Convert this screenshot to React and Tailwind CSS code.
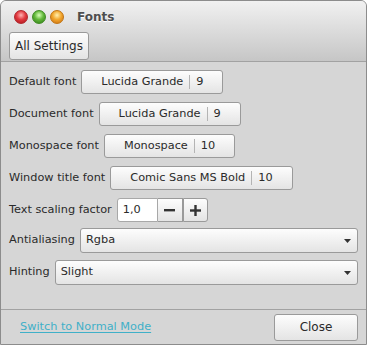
import React from "react";

const font = { fontFamily: '"DejaVu Sans", "Liberation Sans", sans-serif' };

const btn =
  "border border-[#9a9a9a] rounded-[3px] bg-gradient-to-b from-[#fdfdfd] to-[#e4e4e4] text-[#2a2a2a]";

// FONT PICKER BUTTON
const FontButton = ({ name, size }) => (
  <button className={`${btn} h-[24px] flex items-center pl-[19px] pr-[19px]`}>
    <span>{name}</span>
    <span className="mx-[6px] w-px h-[14px] bg-[#b4b4b4]" />
    <span>{size}</span>
  </button>
);

const Row = ({ label, children, className = "" }) => (
  <div className={`flex items-center gap-[5px] ${className}`}>
    <span className="whitespace-nowrap">{label}</span>
    {children}
  </div>
);

// DROPDOWN
const Select = ({ value }) => (
  <div className={`${btn} flex-1 h-[25px] flex items-center pl-[5px] pr-[6px]`}>
    <span className="flex-1">{value}</span>
    <svg width="7" height="4" viewBox="0 0 7 4">
      <path d="M0 0H7L3.5 4Z" fill="#333" />
    </svg>
  </div>
);

const Light = ({ c }) => (
  <span className={`w-[14px] h-[14px] rounded-full border ${c}`} />
);

const App = () => {
  return (
    <div
      style={font}
      className="w-[367px] h-[345px] border border-[#8c8c8c] rounded-t-[6px] overflow-hidden bg-[#d6d6d6] flex flex-col text-[11.3px] text-[#2a2a2a]"
    >
      {/* HEADER */}
      <div className="h-[61px] bg-gradient-to-b from-[#f1f1f1] to-[#c6c6c6] border-b border-[#a2a2a2] flex flex-col">
        <div className="h-[30px] flex items-center pl-[13px] pt-[1px]">
          <div className="flex gap-[4px]">
            <Light c="border-[#b0262c] bg-[radial-gradient(circle_at_50%_35%,#ffb3b3,#e23a40_45%,#a81419)]" />
            <Light c="border-[#3e8a22] bg-[radial-gradient(circle_at_50%_35%,#d8ffb8,#62b83a_45%,#2e7a16)]" />
            <Light c="border-[#c07412] bg-[radial-gradient(circle_at_50%_35%,#fff0b0,#f2a72e_45%,#c86a0c)]" />
          </div>
          <span className="ml-[13px] font-bold text-[12px] text-[#4e4e4e] [text-shadow:0_1px_0_#fff]">
            Fonts
          </span>
        </div>
        <div className="pl-[8px] pt-[1px]">
          <button className={`${btn} h-[28px] w-[80px] text-[12px]`}>All Settings</button>
        </div>
      </div>

      {/* BODY */}
      <div className="flex-1 flex flex-col px-[8px] pt-[8px] border-b border-[#a2a2a2]">
        <Row label="Default font">
          <FontButton name="Lucida Grande" size="9" />
        </Row>
        <Row label="Document font" className="mt-[8px]">
          <FontButton name="Lucida Grande" size="9" />
        </Row>
        <Row label="Monospace font" className="mt-[8px]">
          <FontButton name="Monospace" size="10" />
        </Row>
        <Row label="Window title font" className="mt-[8px]">
          <FontButton name="Comic Sans MS Bold" size="10" />
        </Row>
        <Row label="Text scaling factor" className="mt-[8px]">
          <div className="flex h-[24px]">
            <div className="w-[41px] h-full bg-white border border-[#a8a8a8] rounded-l-[3px] flex items-center pl-[5px]">
              1,0
            </div>
            <button className={`${btn} rounded-none border-l-0 w-[25px] h-full flex items-center justify-center`}>
              <svg width="11" height="3" viewBox="0 0 11 3">
                <rect width="11" height="2.4" fill="#333" />
              </svg>
            </button>
            <button className={`${btn} rounded-l-none w-[25px] h-full flex items-center justify-center`}>
              <svg width="11" height="11" viewBox="0 0 11 11">
                <rect y="4.3" width="11" height="2.4" fill="#333" />
                <rect x="4.3" width="2.4" height="11" fill="#333" />
              </svg>
            </button>
          </div>
        </Row>
        <Row label="Antialiasing" className="mt-[6px]">
          <Select value="Rgba" />
        </Row>
        <Row label="Hinting" className="mt-[7px]">
          <Select value="Slight" />
        </Row>
      </div>

      {/* FOOTER */}
      <div className="h-[34px] flex items-center justify-between pl-[19px] pr-[8px]">
        <a className="text-[#3fb0c8] underline underline-offset-2">Switch to Normal Mode</a>
        <button className={`${btn} w-[84px] h-[27px] text-[12px]`}>Close</button>
      </div>
    </div>
  );
};

export default App;
